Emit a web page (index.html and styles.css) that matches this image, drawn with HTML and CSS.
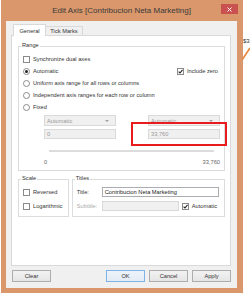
FILE: index.html
```html
<!DOCTYPE html>
<html lang="en">
<head>
  <meta charset="UTF-8" />
  <title>Edit Axis</title>
  <link rel="stylesheet" href="styles.css">
</head>
<body>

  <!-- bits of the chart behind the dialog -->
  <div class="desk-label">$32</div>
  <svg class="desk-line" width="8" height="14" viewBox="0 0 8 14">
    <path d="M0 13 L8 1" stroke="#e8873e" stroke-width="1.6" fill="none"/>
  </svg>

  <div class="window">
    <div class="titlebar">
      <span class="title">Edit Axis [Contribucion Neta Marketing]</span>
      <span class="close">
        <svg width="5" height="5" viewBox="0 0 5 5"><path d="M0.5 0.5 L4.5 4.5 M4.5 0.5 L0.5 4.5" stroke="#fff" stroke-width="1"/></svg>
      </span>
    </div>

    <div class="client">
      <div class="tabs">
        <div class="tab active">General</div>
        <div class="tab">Tick Marks</div>
      </div>

      <div class="panel">
        <div class="group range">
          <span class="group-label">Range</span>
          <div class="row"><span class="check"></span>Synchronize dual axes</div>
          <div class="row">
            <span class="radio on"></span>Automatic
            <span class="aside">
              <span class="check on"><svg width="5" height="5" viewBox="0 0 5 5"><path d="M0.6 2.6 L2 4 L4.5 0.8" stroke="#222" stroke-width="1.1" fill="none"/></svg></span>Include zero
            </span>
          </div>
          <div class="row"><span class="radio"></span>Uniform axis range for all rows or columns</div>
          <div class="row"><span class="radio"></span>Independent axis ranges for each row or column</div>
          <div class="row"><span class="radio"></span>Fixed</div>

          <div class="fixed">
            <div class="fixed-row">
              <div class="field">Automatic<span class="arrow"></span></div>
              <div class="field">Automatic<span class="arrow"></span></div>
            </div>
            <div class="fixed-row">
              <div class="field">0</div>
              <div class="field">33,760</div>
            </div>
            <div class="slider"></div>
            <div class="ends"><span>0</span><span>33,760</span></div>
          </div>

          <div class="highlight"></div>
        </div>

        <div class="lower">
          <div class="group scale">
            <span class="group-label">Scale</span>
            <div class="trow"><span class="check"></span>Reversed</div>
            <div class="trow"><span class="check"></span>Logarithmic</div>
          </div>
          <div class="group titles">
            <span class="group-label">Titles</span>
            <div class="trow">
              <span class="lbl">Title:</span>
              <span class="input">Contribucion Neta Marketing</span>
            </div>
            <div class="trow">
              <span class="lbl off">Subtitle:</span>
              <span class="input off"></span>
              <span class="check on auto"><svg width="5" height="5" viewBox="0 0 5 5"><path d="M0.6 2.6 L2 4 L4.5 0.8" stroke="#222" stroke-width="1.1" fill="none"/></svg></span>Automatic
            </div>
          </div>
        </div>
      </div>

      <div class="buttons">
        <button class="btn clear">Clear</button>
        <button class="btn ok">OK</button>
        <button class="btn">Cancel</button>
        <button class="btn">Apply</button>
      </div>
    </div>
  </div>

</body>
</html>
```

FILE: styles.css
```css
body {
  margin: 0;
  width: 250px;
  height: 300px;
  background: #fff;
  font-family: 'Liberation Sans', Arial, sans-serif;
  font-size: 5.7px;
  color: #333;
  position: relative;
  overflow: hidden;
}

.desk-label {
  position: absolute;
  left: 243px;
  top: 38px;
  font-size: 6px;
  color: #333;
}

.desk-line {
  position: absolute;
  left: 242px;
  top: 47px;
}

.window {
  margin-left: 1px;
  width: 242px;
  height: 293px;
  box-sizing: border-box;
  background: #d9976b;
  padding: 0 6px 5px 5px;
  display: flex;
  flex-direction: column;
}

.titlebar {
  height: 21px;
  flex: none;
  display: flex;
  align-items: center;
  justify-content: center;
  position: relative;
  font-size: 8px;
  color: #3a3a3a;
}

.close {
  position: absolute;
  right: -1px;
  top: 4px;
  width: 17px;
  height: 10px;
  background: #c9514f;
  display: flex;
  align-items: center;
  justify-content: center;
}

.client {
  flex: 1;
  background: #f0f0f0;
  padding: 3px 6px 0 5px;
  display: flex;
  flex-direction: column;
}

/* tabs */
.tabs {
  display: flex;
  align-items: flex-end;
  height: 11px;
  padding-left: 2px;
}

.tab {
  height: 9px;
  width: 38px;
  box-sizing: border-box;
  border: 1px solid #d9d9d9;
  border-bottom: none;
  background: #f0f0f0;
  display: flex;
  align-items: center;
  justify-content: center;
  margin-left: -1px;
}

.tab.active {
  width: 33px;
  height: 12px;
  margin-left: 0;
  margin-bottom: -1px;
  background: #fff;
  position: relative;
  z-index: 1;
}

.panel {
  height: 231px;
  box-sizing: border-box;
  border: 1px solid #d9d9d9;
  background: #fff;
  padding: 10px 5px 0 6px;
}

/* group boxes */
.group {
  position: relative;
  border: 1px solid #dcdcdc;
  box-sizing: border-box;
}

.group-label {
  position: absolute;
  top: -6px;
  left: 2px;
  padding: 0 1px;
  line-height: 8px;
  background: #fff;
}

.range {
  height: 125px;
  padding: 6px 0 0 4px;
}

.row {
  height: 12px;
  display: flex;
  align-items: center;
}

.check,
.radio {
  width: 7px;
  height: 7px;
  box-sizing: border-box;
  border: 1px solid #8a8a8a;
  background: #fff;
  margin-right: 3px;
  flex: none;
  display: flex;
  align-items: center;
  justify-content: center;
}

.radio {
  border-radius: 50%;
}

.radio.on::after {
  content: '';
  width: 3px;
  height: 3px;
  border-radius: 50%;
  background: #222;
}

.aside {
  margin-left: auto;
  width: 47px;
  display: flex;
  align-items: center;
}

.fixed {
  margin: 2px 0 0 21px;
}

.fixed-row {
  display: flex;
  gap: 32px;
}

.fixed-row + .fixed-row {
  margin-top: 3px;
}

.field {
  width: 72px;
  height: 11px;
  box-sizing: border-box;
  border: 1px solid #dadada;
  background: #f0f0f0;
  color: #9a9a9a;
  padding-left: 2px;
  display: flex;
  align-items: center;
}

.fixed-row + .fixed-row .field {
  height: 10px;
}

.arrow {
  margin-left: auto;
  margin-right: 6px;
  border-left: 2px solid transparent;
  border-right: 2px solid transparent;
  border-top: 2px solid #a0a0a0;
}

.slider {
  margin: 11px 0 0 5px;
  width: 165px;
  height: 2px;
  background: #dcdcdc;
}

.ends {
  display: flex;
  justify-content: space-between;
  width: 176px;
  margin-top: 6px;
  line-height: 8px;
  color: #666;
}

.highlight {
  position: absolute;
  left: 112px;
  top: 75px;
  width: 96px;
  height: 24px;
  box-sizing: border-box;
  border: 2px solid #e81c1c;
}

/* scale + titles */
.lower {
  display: flex;
  gap: 3px;
  margin-top: 8px;
}

.scale,
.titles {
  height: 38px;
  padding: 5px 0 0 4px;
}

.scale {
  width: 51px;
}

.titles {
  width: 154px;
}

.trow {
  height: 14px;
  display: flex;
  align-items: center;
}

.lbl {
  width: 25px;
  flex: none;
}

.lbl.off {
  color: #aaa;
}

.input {
  width: 117px;
  height: 10px;
  box-sizing: border-box;
  border: 1px solid #abadb3;
  background: #fff;
  padding-left: 2px;
  display: flex;
  align-items: center;
  color: #222;
}

.input.off {
  width: 77px;
  background: #f0f0f0;
  border-color: #d9d9d9;
}

.check.auto {
  margin-left: 3px;
}

/* dialog buttons */
.buttons {
  display: flex;
  gap: 4px;
  margin-top: 4px;
  padding-left: 1px;
}

.btn {
  width: 39px;
  height: 12px;
  padding: 0;
  box-sizing: border-box;
  border: 1px solid #adadad;
  background: linear-gradient(#f2f2f2, #e5e5e5);
  font-family: inherit;
  font-size: 5.7px;
  color: #333;
}

.btn.clear {
  margin-right: auto;
}

.btn.ok {
  border-color: #7db4e8;
  background: linear-gradient(#eef3f9, #e3ebf4);
}
```
